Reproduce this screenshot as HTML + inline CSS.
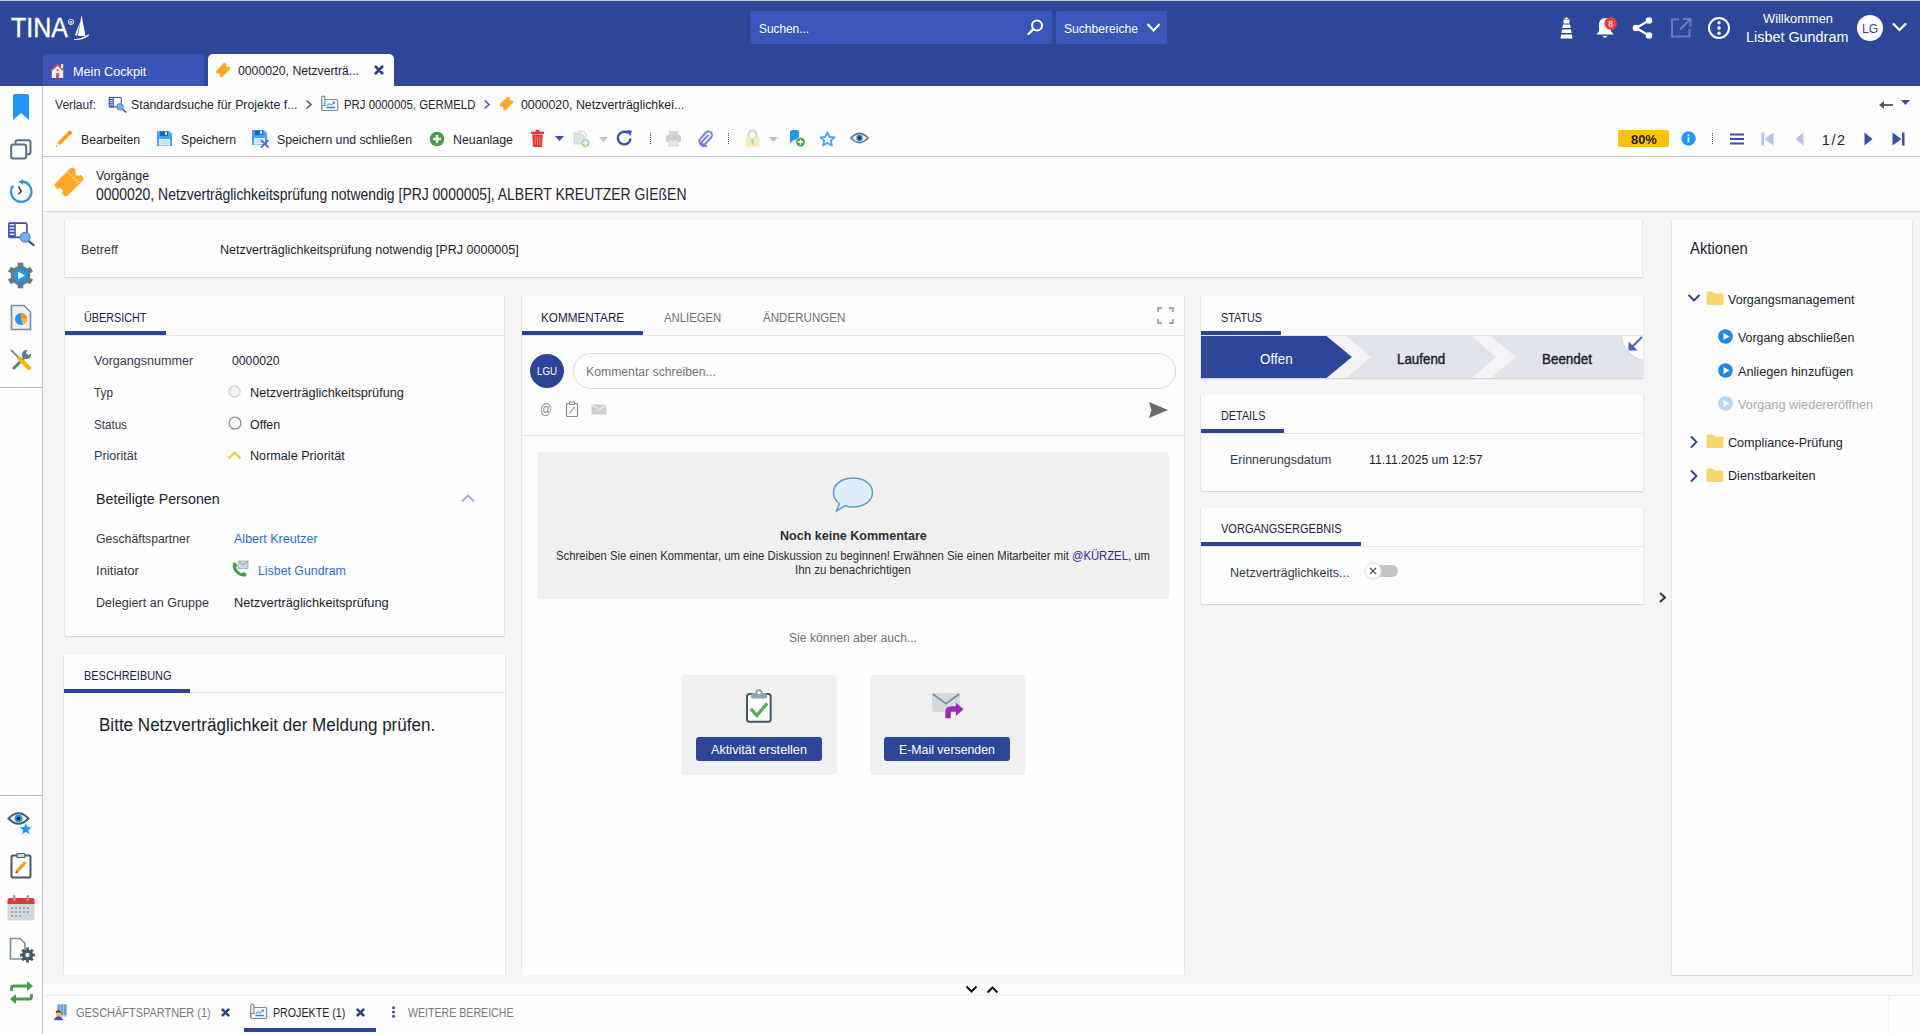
<!DOCTYPE html>
<html><head><meta charset="utf-8"><title>TINA</title>
<style>
*{box-sizing:border-box;margin:0;padding:0}
html,body{width:1920px;height:1034px;overflow:hidden;background:#fdfdfd;font-family:"Liberation Sans",sans-serif;color:#1f2230}
.a{position:absolute;display:block}
.t{position:absolute;white-space:nowrap;line-height:1}
.card{position:absolute;background:#fdfdfd;box-shadow:-1px 0 0 #e7e7e7,1px 0 0 #e7e7e7,0 1px 1px rgba(0,0,0,.13)}
</style></head><body>
<div class="a" style="left:0px;top:0px;width:1920px;height:86px;background:#2e4798;"></div>
<div class="a" style="left:0px;top:0px;width:1920px;height:1px;background:#c9c9cc;"></div>
<div class="a" style="left:0px;top:86px;width:42px;height:948px;background:#fdfdfd;"></div>
<div class="a" style="left:42px;top:86px;width:1px;height:948px;background:#c2c2c2;"></div>
<div class="a" style="left:0px;top:387px;width:42px;height:1px;background:#c2c2c2;"></div>
<div class="a" style="left:0px;top:795px;width:42px;height:1px;background:#c2c2c2;"></div>
<div class="a" style="left:43px;top:212px;width:1877px;height:772px;background:#f5f5f5;"></div>
<div class="a" style="left:43px;top:156px;width:1877px;height:1px;background:#c6c6c6;"></div>
<div class="a" style="left:43px;top:211px;width:1877px;height:1px;background:#dedede;"></div>
<div class="t" style="left:11.3px;top:15.24px;font-size:26.78px;color:#ffffff;transform:scaleX(0.9346);transform-origin:0 0;-webkit-text-stroke:0.35px #fff">TINA</div>
<svg class="a" style="left:67px;top:18px" width="8" height="8" viewBox="0 0 8 8"><circle cx="4" cy="4" r="2.7" fill="none" stroke="#fff" stroke-width="0.8"/><text x="4" y="5.5" font-size="4" text-anchor="middle" fill="#fff" font-family="Liberation Sans" font-weight="bold">R</text></svg>
<svg class="a" style="left:73px;top:14px" width="17" height="27" viewBox="0 0 17 27"><path d="M8.5 1 L12.5 22 L5 22 Z" fill="#fff"/><path d="M7.5 7 L4 22 L2 21 Z" fill="#fff"/><path d="M1 25 Q9 25 16 20 L15.5 22 Q9 26.5 1 26 Z" fill="#fff"/></svg>
<div class="a" style="left:750px;top:11px;width:302px;height:33px;background:#3a56b8;border-radius:2px"></div>
<div class="t" style="left:759.0px;top:22.90px;font-size:12.71px;color:#ffffff;transform:scaleX(0.9314);transform-origin:0 0;">Suchen...</div>
<svg class="a" style="left:1027px;top:19px" width="17" height="17" viewBox="0 0 17 17"><circle cx="10" cy="6.5" r="5" fill="none" stroke="#fff" stroke-width="2"/><path d="M6.5 10 L1.5 15" stroke="#fff" stroke-width="2.2" stroke-linecap="round"/></svg>
<div class="a" style="left:1056px;top:11px;width:111px;height:33px;background:#3a56b8;border-radius:2px"></div>
<div class="t" style="left:1064.0px;top:22.90px;font-size:12.71px;color:#ffffff;transform:scaleX(0.9524);transform-origin:0 0;">Suchbereiche</div>
<svg class="a" style="left:1146px;top:22px" width="15" height="11" viewBox="0 0 15 11"><path d="M1.5 2 L7.5 8.5 L13.5 2" fill="none" stroke="#fff" stroke-width="2.2"/></svg>
<svg class="a" style="left:1558px;top:16px" width="17" height="23" viewBox="0 0 17 23"><path d="M6 3 L8.5 1 L11 3 Z" fill="#fff"/><rect x="5.5" y="3.5" width="6" height="4" fill="#fff"/><path d="M5 8.5 L12 8.5 L12.8 12 L4.2 12 Z" fill="#fff"/><path d="M4 13.5 L13 13.5 L13.6 17 L3.4 17 Z" fill="#fff"/><path d="M3.2 18.5 L13.8 18.5 L14.5 22.5 L2.5 22.5 Z" fill="#fff"/></svg>
<svg class="a" style="left:1594px;top:15px" width="26" height="25" viewBox="0 0 26 25"><path d="M11 3 C6.5 3 5 7 5 10.5 L5 16 L2.5 19.5 L19.5 19.5 L17 16 L17 10.5 C17 7 15.5 3 11 3 Z" fill="#fff"/><path d="M8.5 21 Q11 24.5 13.5 21 Z" fill="#fff"/><circle cx="16.7" cy="8.5" r="6.3" fill="#e8403a"/><text x="16.7" y="11.6" font-size="8.5" text-anchor="middle" fill="#fff" font-family="Liberation Sans">8</text></svg>
<svg class="a" style="left:1631px;top:16px" width="24" height="24" viewBox="0 0 24 24"><circle cx="18" cy="4.5" r="3.3" fill="#fff"/><circle cx="18" cy="19.5" r="3.3" fill="#fff"/><circle cx="5" cy="12" r="3.3" fill="#fff"/><path d="M18 4.5 L5 12 L18 19.5" fill="none" stroke="#fff" stroke-width="2.2"/></svg>
<svg class="a" style="left:1670px;top:17px" width="23" height="21" viewBox="0 0 23 21"><path d="M9 2.5 L2 2.5 L2 19.5 L19.5 19.5 L19.5 12" fill="none" stroke="#6a7cc0" stroke-width="2"/><path d="M13 2 L20.5 2 L20.5 9.5 M20 2.5 L10 12.5" fill="none" stroke="#6a7cc0" stroke-width="2"/></svg>
<svg class="a" style="left:1707px;top:16px" width="24" height="24" viewBox="0 0 24 24"><circle cx="12" cy="12" r="10" fill="none" stroke="#fff" stroke-width="2"/><circle cx="12" cy="6.8" r="1.7" fill="#fff"/><circle cx="12" cy="12" r="1.7" fill="#fff"/><circle cx="12" cy="17.2" r="1.7" fill="#fff"/></svg>
<div class="t" style="left:1762.5px;top:12.99px;font-size:12.60px;color:#ffffff;transform:scaleX(1.0203);transform-origin:0 0;">Willkommen</div>
<div class="t" style="left:1746.0px;top:29.80px;font-size:14.70px;color:#ffffff;transform:scaleX(0.9800);transform-origin:0 0;">Lisbet Gundram</div>
<svg class="a" style="left:1856px;top:14px" width="28" height="28" viewBox="0 0 28 28"><circle cx="14" cy="14" r="13" fill="#fff"/></svg>
<div class="t" style="left:1861.5px;top:23.49px;font-size:12.60px;color:#2e4798;transform:scaleX(0.9519);transform-origin:0 0;">LG</div>
<svg class="a" style="left:1891px;top:21px" width="17" height="12" viewBox="0 0 17 12"><path d="M2 2.5 L8.5 9 L15 2.5" fill="none" stroke="#fff" stroke-width="2.2"/></svg>
<div class="a" style="left:43px;top:54px;width:161px;height:32px;background:#3955b7;border-radius:4px 4px 0 0"></div>
<svg class="a" style="left:49px;top:62px" width="17" height="17" viewBox="0 0 17 17"><path d="M8.5 1.5 L1 8.5 L2.2 9.6 L8.5 3.8 L14.8 9.6 L16 8.5 Z" fill="#d9534f"/><rect x="12" y="2" width="2.2" height="4" fill="#e8e8ee"/><path d="M2.8 9 L8.5 3.9 L14.2 9 L14.2 16 L2.8 16 Z" fill="#eeeef4"/><rect x="7" y="11" width="3.2" height="5" fill="#e8542a"/><circle cx="8.5" cy="8.2" r="1" fill="#2a6fb0"/></svg>
<div class="t" style="left:73.0px;top:66.10px;font-size:12.71px;color:#ffffff;transform:scaleX(0.9982);transform-origin:0 0;">Mein Cockpit</div>
<div class="a" style="left:208px;top:54px;width:186px;height:32px;background:#fdfdfd;border-radius:5px 5px 0 0"></div>
<svg class="a" style="left:214px;top:61px" width="18" height="18" viewBox="0 0 18 18"><g transform="rotate(-45 9.00 9.00)"><rect x="2.34" y="4.59" width="13.32" height="8.82" rx="1.62" fill="#ffa726"/><circle cx="2.34" cy="9.00" r="1.53" fill="#fdfdfd"/><circle cx="15.66" cy="9.00" r="1.53" fill="#fdfdfd"/></g></svg>
<div class="t" style="left:238.0px;top:65.40px;font-size:12.71px;color:#1f2230;transform:scaleX(0.9625);transform-origin:0 0;">0000020, Netzverträ...</div>
<svg class="a" style="left:374px;top:65px" width="10" height="10" viewBox="0 0 10 10"><path d="M1.8 1.8 L8.2 8.2 M8.2 1.8 L1.8 8.2" stroke="#2d3f8e" stroke-width="2.8" stroke-linecap="round"/></svg>
<div class="t" style="left:55.0px;top:99.10px;font-size:12.71px;color:#2a2d3a;transform:scaleX(0.9516);transform-origin:0 0;">Verlauf:</div>
<svg class="a" style="left:108.1px;top:96.1px" width="19" height="18" viewBox="0 0 19 18"><g transform="scale(0.6670)"><rect x="2" y="2.2" width="17.9" height="14.1" rx="1.5" fill="#fdfdfd" stroke="#3f51b5" stroke-width="1.7"/><rect x="1.2" y="1.4" width="7.6" height="15.7" rx="1.2" fill="#3f51b5"/><g fill="#e8eaf6"><rect x="2.6" y="3" width="4.8" height="1.5"/><rect x="2.6" y="6.2" width="4.8" height="1.5"/><rect x="2.6" y="9.3" width="4.8" height="1.5"/><rect x="2.6" y="12.6" width="4.8" height="1.5"/></g><path d="M21.5 19.8 L26.6 24.1" stroke="#455a64" stroke-width="2.2" stroke-linecap="round"/><circle cx="18.1" cy="16.3" r="5" fill="#64b5f6" stroke="#5d6b73" stroke-width="0.9"/></g></svg>
<div class="t" style="left:131.0px;top:99.10px;font-size:12.71px;color:#1f2230;transform:scaleX(0.9702);transform-origin:0 0;">Standardsuche für Projekte f...</div>
<svg class="a" style="left:305px;top:99px" width="8" height="11" viewBox="0 0 8 11"><path d="M1.5 1.5 L6 5.5 L1.5 9.5" fill="none" stroke="#4a55a5" stroke-width="1.6"/></svg>
<svg class="a" style="left:320px;top:95px" width="20" height="18" viewBox="0 0 20 18"><g transform="scale(1.0000)"><rect x="1.7" y="4.5" width="16" height="11" rx="1.2" fill="#f4f7fb" stroke="#78909c" stroke-width="1.2"/><path d="M1.7 14.5 V2.6 Q1.7 1.2 3.1 1.2 H3.5 Q4.9 1.2 4.9 2.6 V10.5 H1.7" fill="#eef3f8" stroke="#78909c" stroke-width="1.2"/><path d="M6.8 10.5 L9.3 8.7 L11.3 10 L14 7.7" fill="none" stroke="#64a8e8" stroke-width="1.2"/><circle cx="14" cy="7.6" r="1.1" fill="#1e88e5"/><path d="M6.5 12.5 H15" stroke="#1e88e5" stroke-width="1.4"/></g></svg>
<div class="t" style="left:343.6px;top:99.10px;font-size:12.71px;color:#1f2230;transform:scaleX(0.8946);transform-origin:0 0;">PRJ 0000005, GERMELD</div>
<svg class="a" style="left:483px;top:99px" width="8" height="11" viewBox="0 0 8 11"><path d="M1.5 1.5 L6 5.5 L1.5 9.5" fill="none" stroke="#4a55a5" stroke-width="1.6"/></svg>
<svg class="a" style="left:498px;top:95px" width="17" height="17" viewBox="0 0 17 17"><g transform="rotate(-45 8.50 8.50)"><rect x="2.21" y="4.33" width="12.58" height="8.33" rx="1.53" fill="#ffa726"/><circle cx="2.21" cy="8.50" r="1.45" fill="#fdfdfd"/><circle cx="14.79" cy="8.50" r="1.45" fill="#fdfdfd"/></g></svg>
<div class="t" style="left:521.2px;top:99.10px;font-size:12.71px;color:#1f2230;transform:scaleX(0.9715);transform-origin:0 0;">0000020, Netzverträglichkei...</div>
<svg class="a" style="left:1878px;top:99px" width="16" height="12" viewBox="0 0 16 12"><path d="M15 6 H4" stroke="#455a64" stroke-width="1.8"/><path d="M1 6 L6 2 V10 Z" fill="#455a64"/></svg>
<svg class="a" style="left:1900px;top:99px" width="11" height="7" viewBox="0 0 11 7"><path d="M1 1 L10 1 L5.5 6 Z" fill="#3a4fa8"/></svg>
<svg class="a" style="left:55px;top:129px" width="18" height="19" viewBox="0 0 18 19"><path d="M14.5 1.5 L17 4 L5 16 L2.5 13.5 Z" fill="#ffa000"/><path d="M14.5 1.5 L17 4 L15.5 5.5 L13 3 Z" fill="#e57373"/><path d="M2.5 13.5 L5 16 L1 17.8 Z" fill="#ffe0b2"/><path d="M1.6 16.4 L1 17.8 L2.4 17.2 Z" fill="#333"/></svg>
<div class="t" style="left:80.5px;top:133.70px;font-size:12.71px;color:#1f2230;transform:scaleX(0.9600);transform-origin:0 0;">Bearbeiten</div>
<svg class="a" style="left:156px;top:130px" width="17" height="17" viewBox="0 0 17 17"><path d="M1 1 L13 1 L16 4 L16 16 L1 16 Z" fill="#42a5f5"/><rect x="4" y="1.5" width="8" height="4.5" fill="#1565c0"/><rect x="9" y="2" width="2" height="3" fill="#e3f2fd"/><rect x="3" y="9" width="11" height="6.5" fill="#e3f2fd"/><path d="M4.5 11h8M4.5 13h8" stroke="#90caf9" stroke-width="0.8"/></svg>
<div class="t" style="left:180.5px;top:133.70px;font-size:12.71px;color:#1f2230;transform:scaleX(0.9613);transform-origin:0 0;">Speichern</div>
<svg class="a" style="left:251px;top:129px" width="19" height="19" viewBox="0 0 19 19"><path d="M1 1 L13 1 L16 4 L16 16 L1 16 Z" fill="#42a5f5"/><rect x="4" y="1.5" width="8" height="4.5" fill="#1565c0"/><rect x="9" y="2" width="2" height="3" fill="#e3f2fd"/><rect x="3" y="9" width="11" height="6.5" fill="#e3f2fd"/><path d="M4.5 11h8M4.5 13h8" stroke="#90caf9" stroke-width="0.8"/><path d="M10 11 L17.5 18.5 M17.5 11 L10 18.5" stroke="#5c6bc0" stroke-width="1.8"/></svg>
<div class="t" style="left:276.5px;top:133.70px;font-size:12.71px;color:#1f2230;transform:scaleX(0.9653);transform-origin:0 0;">Speichern und schließen</div>
<svg class="a" style="left:429px;top:131px" width="16" height="16" viewBox="0 0 16 16"><circle cx="8" cy="8" r="7.3" fill="#43a047"/><path d="M8 4 V12 M4 8 H12" stroke="#fff" stroke-width="2.4"/></svg>
<div class="t" style="left:453.0px;top:133.70px;font-size:12.71px;color:#1f2230;transform:scaleX(0.9762);transform-origin:0 0;">Neuanlage</div>
<svg class="a" style="left:530px;top:129px" width="15" height="19" viewBox="0 0 15 19"><rect x="1" y="2.5" width="13" height="2.5" rx="0.6" fill="#e53935"/><rect x="5.5" y="0.8" width="4" height="2" fill="#e53935"/><path d="M2.2 5.5 H12.8 L12 18 H3 Z" fill="#e53935"/><path d="M5.2 7.5 V16 M7.5 7.5 V16 M9.8 7.5 V16" stroke="#ff8a80" stroke-width="0.9"/></svg>
<svg class="a" style="left:555px;top:136px" width="9" height="5" viewBox="0 0 9 5"><path d="M0 0 H9 L4.5 5 Z" fill="#3a4fa8"/></svg>
<svg class="a" style="left:573px;top:130px" width="18" height="18" viewBox="0 0 18 18"><path d="M1 3 H8 L11 6 V14 H1 Z" fill="#dde3e8" stroke="#c8d0d6" stroke-width="0.8"/><path d="M4 1 H10 L13 4 V11" fill="none" stroke="#c8d0d6" stroke-width="1"/><circle cx="12.5" cy="13" r="4.3" fill="#a5d6a7"/><path d="M12.5 10.5 V15.5 M10 13 H15" stroke="#fff" stroke-width="1.6"/></svg>
<svg class="a" style="left:599px;top:137px" width="9" height="5" viewBox="0 0 9 5"><path d="M0 0 H9 L4.5 5 Z" fill="#b8c0e6"/></svg>
<svg class="a" style="left:616px;top:129px" width="18" height="18" viewBox="0 0 18 18"><path d="M14.5 9.5 A6.3 6.3 0 1 1 12 4" fill="none" stroke="#3a4fb8" stroke-width="2.4"/><path d="M10 1.2 L15.8 1.5 L14.5 7 Z" fill="#3a4fb8"/></svg>
<svg class="a" style="left:650px;top:133px" width="2" height="11" viewBox="0 0 2 11"><path d="M0.5 0 V11" stroke="#3f51b5" stroke-width="1" stroke-dasharray="1 1"/></svg>
<svg class="a" style="left:665px;top:130px" width="17" height="17" viewBox="0 0 17 17"><rect x="4" y="1" width="9" height="4" fill="#d5d5d5"/><rect x="1" y="5" width="15" height="7" rx="1.5" fill="#cfcfcf"/><rect x="4" y="10" width="9" height="6" fill="#e6e6e6" stroke="#cfcfcf" stroke-width="0.8"/></svg>
<svg class="a" style="left:697px;top:130px" width="16" height="17" viewBox="0 0 16 17"><path d="M11.5 5 L5 11.5 A2 2 0 0 0 8 14 L14 7.5 A3.5 3.5 0 0 0 9 2.5 L3 9 A5 5 0 0 0 10 15.5" fill="none" stroke="#7b7fd8" stroke-width="1.9"/></svg>
<svg class="a" style="left:728px;top:133px" width="2" height="11" viewBox="0 0 2 11"><path d="M0.5 0 V11" stroke="#3f51b5" stroke-width="1" stroke-dasharray="1 1"/></svg>
<svg class="a" style="left:744px;top:129px" width="17" height="19" viewBox="0 0 17 19"><path d="M4.5 8 V5.5 A4 4 0 0 1 12.5 5.5 V8" fill="none" stroke="#c5ccd0" stroke-width="2"/><rect x="1.5" y="8" width="14" height="10" rx="1.2" fill="#f9edb5"/><circle cx="8.5" cy="11.5" r="1.3" fill="#b8c4ca"/><rect x="7.8" y="11.5" width="1.4" height="4" fill="#b8c4ca"/></svg>
<svg class="a" style="left:769px;top:137px" width="9" height="5" viewBox="0 0 9 5"><path d="M0 0 H9 L4.5 5 Z" fill="#b8c0e6"/></svg>
<svg class="a" style="left:789px;top:129px" width="17" height="19" viewBox="0 0 17 19"><path d="M1 3.2 Q1 1 3.2 1 H7.8 Q10 1 10 3.2 V14 L5.5 10.5 L1 14 Z" fill="#2196f3"/><circle cx="11.5" cy="13" r="4.8" fill="#43a047" stroke="#fdfdfd" stroke-width="0.8"/><path d="M11.5 10.3 V15.7 M8.8 13 H14.2" stroke="#fff" stroke-width="1.6"/></svg>
<svg class="a" style="left:819px;top:131px" width="17" height="16" viewBox="0 0 17 16"><path d="M8.5 1.5 L10.6 6 L15.5 6.4 L11.8 9.7 L12.9 14.6 L8.5 12 L4.1 14.6 L5.2 9.7 L1.5 6.4 L6.4 6 Z" fill="none" stroke="#42a5f5" stroke-width="1.8" stroke-linejoin="round"/></svg>
<svg class="a" style="left:850px;top:132px" width="19" height="12" viewBox="0 0 19 12"><path d="M1 6 Q9.5 -3 18 6 Q9.5 15 1 6 Z" fill="#fff" stroke="#607d8b" stroke-width="1.8"/><circle cx="9.5" cy="6" r="3.2" fill="#1e88e5"/><circle cx="9.5" cy="6" r="1.4" fill="#111"/></svg>
<div class="a" style="left:1618px;top:130px;width:51px;height:17px;background:#ffc107;border-radius:2px"></div>
<div class="t" style="left:1631.2px;top:134.29px;font-size:12.60px;color:#1a1a1a;font-weight:bold;transform:scaleX(1.0231);transform-origin:0 0;">80%</div>
<svg class="a" style="left:1681px;top:131px" width="15" height="15" viewBox="0 0 15 15"><circle cx="7.5" cy="7.5" r="7.2" fill="#2196f3"/><rect x="6.6" y="6.3" width="1.8" height="5" fill="#fff"/><circle cx="7.5" cy="4.3" r="1" fill="#fff"/></svg>
<svg class="a" style="left:1712px;top:133px" width="2" height="12" viewBox="0 0 2 12"><path d="M0.5 0 V12" stroke="#3f51b5" stroke-width="1" stroke-dasharray="1 1"/></svg>
<svg class="a" style="left:1730px;top:133px" width="14" height="12" viewBox="0 0 14 12"><path d="M0 1.5 H14 M0 6 H14 M0 10.5 H14" stroke="#3a4fa8" stroke-width="2"/></svg>
<svg class="a" style="left:1761px;top:132px" width="13" height="14" viewBox="0 0 13 14"><rect x="0.5" y="0.5" width="2.5" height="13" fill="#b8c0e6"/><path d="M12.5 0.5 V13.5 L3.5 7 Z" fill="#b8c0e6"/></svg>
<svg class="a" style="left:1795px;top:132px" width="9" height="14" viewBox="0 0 9 14"><path d="M8.5 0.5 V13.5 L0.5 7 Z" fill="#b8c0e6"/></svg>
<div class="t" style="left:1821.8px;top:133.38px;font-size:14.50px;color:#1f2230;letter-spacing:1.6px">1/2</div>
<svg class="a" style="left:1864px;top:132px" width="9" height="14" viewBox="0 0 9 14"><path d="M0.5 0.5 V13.5 L8.5 7 Z" fill="#3a4fa8"/></svg>
<svg class="a" style="left:1892px;top:132px" width="13" height="14" viewBox="0 0 13 14"><path d="M0.5 0.5 V13.5 L9.5 7 Z" fill="#3a4fa8"/><rect x="10" y="0.5" width="2.5" height="13" fill="#3a4fa8"/></svg>
<svg class="a" style="left:51px;top:164px" width="36" height="36" viewBox="0 0 36 36"><g transform="rotate(-45 18.00 18.00)"><rect x="4.68" y="9.18" width="26.64" height="17.64" rx="3.24" fill="#ffa726"/><circle cx="4.68" cy="18.00" r="3.06" fill="#fdfdfd"/><circle cx="31.32" cy="18.00" r="3.06" fill="#fdfdfd"/><circle cx="24.12" cy="11.65" r="1.01" fill="#ffd9a0"/><circle cx="24.12" cy="14.82" r="1.01" fill="#ffd9a0"/><circle cx="24.12" cy="18.00" r="1.01" fill="#ffd9a0"/><circle cx="24.12" cy="21.18" r="1.01" fill="#ffd9a0"/><circle cx="24.12" cy="24.35" r="1.01" fill="#ffd9a0"/></g></svg>
<div class="t" style="left:96.2px;top:169.90px;font-size:12.71px;color:#1f2230;transform:scaleX(0.9761);transform-origin:0 0;">Vorgänge</div>
<div class="t" style="left:96.0px;top:186.51px;font-size:15.75px;color:#1f2230;transform:scaleX(0.8859);transform-origin:0 0;">0000020, Netzverträglichkeitsprüfung notwendig [PRJ 0000005], ALBERT KREUTZER GIEßEN</div>
<div class="card" style="left:65px;top:220px;width:1577px;height:57px;"></div>
<div class="t" style="left:80.8px;top:244.10px;font-size:12.71px;color:#343849;transform:scaleX(0.9866);transform-origin:0 0;">Betreff</div>
<div class="t" style="left:220.0px;top:244.10px;font-size:12.71px;color:#1b1e2c;transform:scaleX(0.9862);transform-origin:0 0;">Netzverträglichkeitsprüfung notwendig [PRJ 0000005]</div>
<div class="card" style="left:65px;top:296px;width:439px;height:340px;"></div>
<div class="t" style="left:84.3px;top:311.80px;font-size:12.71px;color:#1c2240;transform:scaleX(0.8500);transform-origin:0 0;">ÜBERSICHT</div>
<div class="a" style="left:65px;top:335px;width:439px;height:1px;background:#e4e4e4;"></div>
<div class="a" style="left:65px;top:331px;width:101px;height:4px;background:#2c4397;"></div>
<div class="t" style="left:93.7px;top:354.90px;font-size:12.71px;color:#343849;transform:scaleX(0.9892);transform-origin:0 0;">Vorgangsnummer</div>
<div class="t" style="left:232.0px;top:354.90px;font-size:12.71px;color:#1b1e2c;transform:scaleX(0.9623);transform-origin:0 0;">0000020</div>
<div class="t" style="left:93.7px;top:386.90px;font-size:12.71px;color:#343849;transform:scaleX(0.9229);transform-origin:0 0;">Typ</div>
<svg class="a" style="left:228px;top:385px" width="13" height="13" viewBox="0 0 13 13"><circle cx="6.5" cy="6.5" r="5.6" fill="#eef1f8" stroke="#c9cdd3" stroke-width="1.1"/></svg>
<div class="t" style="left:249.5px;top:386.90px;font-size:12.71px;color:#1b1e2c;transform:scaleX(0.9997);transform-origin:0 0;">Netzverträglichkeitsprüfung</div>
<div class="t" style="left:93.7px;top:418.90px;font-size:12.71px;color:#343849;transform:scaleX(0.9134);transform-origin:0 0;">Status</div>
<svg class="a" style="left:228px;top:416px" width="14" height="14" viewBox="0 0 14 14"><circle cx="7" cy="7" r="5.9" fill="#fdfdfd" stroke="#8f8f8f" stroke-width="1.3"/></svg>
<div class="t" style="left:249.5px;top:418.90px;font-size:12.71px;color:#1b1e2c;transform:scaleX(0.9791);transform-origin:0 0;">Offen</div>
<div class="t" style="left:93.7px;top:449.90px;font-size:12.71px;color:#343849;transform:scaleX(0.9892);transform-origin:0 0;">Priorität</div>
<svg class="a" style="left:227px;top:450px" width="15" height="10" viewBox="0 0 15 10"><path d="M1.5 8.5 L7.5 2.5 L13.5 8.5" fill="none" stroke="#f9c12e" stroke-width="1.8"/></svg>
<div class="t" style="left:249.5px;top:449.90px;font-size:12.71px;color:#1b1e2c;transform:scaleX(0.9935);transform-origin:0 0;">Normale Priorität</div>
<div class="t" style="left:95.5px;top:492.20px;font-size:14.70px;color:#1b1e2c;transform:scaleX(0.9711);transform-origin:0 0;">Beteiligte Personen</div>
<svg class="a" style="left:460px;top:492px" width="16" height="12" viewBox="0 0 16 12"><path d="M2 9.5 L8 3.5 L14 9.5" fill="none" stroke="#a3acd0" stroke-width="1.8"/></svg>
<div class="t" style="left:95.5px;top:532.90px;font-size:12.71px;color:#343849;transform:scaleX(0.9646);transform-origin:0 0;">Geschäftspartner</div>
<div class="t" style="left:234.2px;top:532.90px;font-size:12.71px;color:#1f6fd1;transform:scaleX(0.9866);transform-origin:0 0;">Albert Kreutzer</div>
<div class="t" style="left:95.5px;top:565.00px;font-size:12.71px;color:#343849;transform:scaleX(1.0297);transform-origin:0 0;">Initiator</div>
<svg class="a" style="left:231px;top:560px" width="18" height="18" viewBox="0 0 18 18"><path d="M2 3 Q1 9 5 13 Q9 17 15 16.5 L15.5 13.5 L12 12 L10.5 13.5 Q6.5 11.5 5 7.5 L6.5 6 L5 2.5 Z" fill="#43a047"/><rect x="7.5" y="1" width="9.5" height="7.5" fill="#cfd8dc" stroke="#90a4ae" stroke-width="0.8"/><path d="M7.8 1.4 L12.25 5 L16.7 1.4" fill="none" stroke="#78909c" stroke-width="0.8"/></svg>
<div class="t" style="left:257.5px;top:565.00px;font-size:12.71px;color:#1f6fd1;transform:scaleX(0.9713);transform-origin:0 0;">Lisbet Gundram</div>
<div class="t" style="left:95.5px;top:597.10px;font-size:12.71px;color:#343849;transform:scaleX(0.9876);transform-origin:0 0;">Delegiert an Gruppe</div>
<div class="t" style="left:234.2px;top:597.10px;font-size:12.71px;color:#1b1e2c;transform:scaleX(1.0042);transform-origin:0 0;">Netzverträglichkeitsprüfung</div>
<div class="card" style="left:64px;top:655px;width:441px;height:320px;box-shadow:-1px 0 0 #e7e7e7,1px 0 0 #e7e7e7"></div>
<div class="t" style="left:83.5px;top:670.30px;font-size:12.71px;color:#1c2240;transform:scaleX(0.8607);transform-origin:0 0;">BESCHREIBUNG</div>
<div class="a" style="left:64px;top:692px;width:441px;height:1px;background:#e4e4e4;"></div>
<div class="a" style="left:64px;top:689px;width:126px;height:4px;background:#2c4397;"></div>
<div class="t" style="left:98.5px;top:716.93px;font-size:17.85px;color:#1b1e2c;transform:scaleX(0.9548);transform-origin:0 0;">Bitte Netzverträglichkeit der Meldung prüfen.</div>
<div class="card" style="left:522px;top:296px;width:662px;height:679px;box-shadow:-1px 0 0 #e7e7e7,1px 0 0 #e7e7e7"></div>
<div class="t" style="left:540.8px;top:311.80px;font-size:12.71px;color:#1c2240;transform:scaleX(0.9232);transform-origin:0 0;">KOMMENTARE</div>
<div class="t" style="left:664.0px;top:311.80px;font-size:12.71px;color:#6d707c;transform:scaleX(0.8918);transform-origin:0 0;">ANLIEGEN</div>
<div class="t" style="left:762.5px;top:311.80px;font-size:12.71px;color:#6d707c;transform:scaleX(0.9119);transform-origin:0 0;">ÄNDERUNGEN</div>
<div class="a" style="left:522px;top:335px;width:662px;height:1px;background:#e4e4e4;"></div>
<div class="a" style="left:522px;top:331px;width:121px;height:4px;background:#2c4397;"></div>
<svg class="a" style="left:1157px;top:307px" width="17" height="17" viewBox="0 0 17 17"><path d="M1 5 V1 H5 M12 1 H16 V5 M16 12 V16 H12 M5 16 H1 V12" fill="none" stroke="#97a2c9" stroke-width="1.8"/></svg>
<svg class="a" style="left:530px;top:354px" width="34" height="34" viewBox="0 0 34 34"><circle cx="17" cy="17" r="17" fill="#2c4397"/></svg>
<div class="t" style="left:537.0px;top:366.18px;font-size:11.55px;color:#fff;transform:scaleX(0.8421);transform-origin:0 0;">LGU</div>
<div class="a" style="left:573px;top:353px;width:603px;height:36px;border:1px solid #dcdcdc;border-radius:18px;background:#fdfdfd"></div>
<div class="t" style="left:586.4px;top:365.50px;font-size:12.71px;color:#6f7178;transform:scaleX(0.9624);transform-origin:0 0;">Kommentar schreiben...</div>
<div class="t" style="left:539.6px;top:402.30px;font-size:14.00px;color:#8a8a8a;transform:scaleX(0.8443);transform-origin:0 0;">@</div>
<svg class="a" style="left:565px;top:401px" width="14" height="16" viewBox="0 0 14 16"><rect x="1.5" y="2.5" width="11" height="13" rx="1" fill="none" stroke="#8a8a8a" stroke-width="1.2"/><rect x="4.5" y="1" width="5" height="2.5" fill="#fdfdfd" stroke="#8a8a8a" stroke-width="1"/><path d="M4.5 12.5 L9.5 6" stroke="#8a8a8a" stroke-width="1.2"/></svg>
<svg class="a" style="left:591px;top:404px" width="16" height="11" viewBox="0 0 16 11"><rect x="0.5" y="0.5" width="15" height="10" fill="#cfcfcf"/><path d="M0.5 0.5 L8 6 L15.5 0.5" fill="none" stroke="#eeeeee" stroke-width="1.2"/></svg>
<svg class="a" style="left:1148px;top:401px" width="21" height="18" viewBox="0 0 21 18"><path d="M1 1 L20 9 L1 17 L3.5 9 Z" fill="#6b6b6b"/></svg>
<div class="a" style="left:522px;top:435px;width:662px;height:1px;background:#e8e8e8;"></div>
<div class="a" style="left:537px;top:452px;width:632px;height:147px;background:#f0f0f0;border-radius:4px"></div>
<svg class="a" style="left:831px;top:476px" width="44" height="38" viewBox="0 0 44 38"><path d="M22 2 C33 2 41.5 8 41.5 16.5 C41.5 25 33 31 22 31 C19 31 16.5 30.6 14 29.8 L5.5 35 L8.5 27.5 C4.5 24.8 2.5 21 2.5 16.5 C2.5 8 11 2 22 2 Z" fill="#ddeefb" stroke="#5d9ad6" stroke-width="1.5"/></svg>
<div class="t" style="left:779.5px;top:529.14px;font-size:13.12px;color:#2e2e2e;font-weight:bold;transform:scaleX(0.9552);transform-origin:0 0;">Noch keine Kommentare</div>
<div class="t" style="left:555.8px;top:550.61px;font-size:11.87px;color:#2e2e2e;transform:scaleX(0.9521);transform-origin:0 0;">Schreiben Sie einen Kommentar, um eine Diskussion zu beginnen! Erwähnen Sie einen Mitarbeiter mit <span style="color:#2c2ca0">@KÜRZEL</span>, um</div>
<div class="t" style="left:795.3px;top:565.21px;font-size:11.87px;color:#2e2e2e;transform:scaleX(0.9707);transform-origin:0 0;">Ihn zu benachrichtigen</div>
<div class="t" style="left:788.7px;top:631.90px;font-size:12.71px;color:#6f7178;transform:scaleX(0.9538);transform-origin:0 0;">Sie können aber auch...</div>
<div class="a" style="left:681px;top:675px;width:156px;height:100px;background:#f0f0f0;border-radius:4px"></div>
<div class="a" style="left:870px;top:675px;width:155px;height:100px;background:#f0f0f0;border-radius:4px"></div>
<svg class="a" style="left:744px;top:688px" width="30" height="37" viewBox="0 0 30 37"><rect x="3" y="6" width="23.7" height="27.7" rx="2.5" fill="#fdfdfd" stroke="#455a64" stroke-width="2"/><rect x="7" y="5" width="16" height="5.5" rx="1.5" fill="#90a4ae"/><circle cx="15" cy="4.6" r="2.6" fill="#fdfdfd" stroke="#90a4ae" stroke-width="1.9"/><path d="M6.8 20.8 L12.8 27.6 L23.2 15.3" fill="none" stroke="#4caf50" stroke-width="3.2"/></svg>
<div class="a" style="left:696px;top:737px;width:126px;height:24px;background:#2e4699;border-radius:3px"></div>
<div class="t" style="left:711.0px;top:743.99px;font-size:12.60px;color:#fff;transform:scaleX(1.0080);transform-origin:0 0;">Aktivität erstellen</div>
<svg class="a" style="left:930px;top:691px" width="36" height="30" viewBox="0 0 36 30"><rect x="2" y="2" width="28" height="19" rx="3" fill="#d3d9de"/><path d="M2.8 3 L16 12.6 L29.2 3" fill="none" stroke="#78909c" stroke-width="1.7"/><path d="M15 27.6 V21 Q15 15 21 15 H25.5 V11 L34 18.3 L25.5 25.6 V21 H22 Q21 21 21 22 V27.6 Z" fill="#9c27b0" stroke="#f0f0f0" stroke-width="0.6"/></svg>
<div class="a" style="left:884px;top:737px;width:126px;height:24px;background:#2e4699;border-radius:3px"></div>
<div class="t" style="left:899.0px;top:743.99px;font-size:12.60px;color:#fff;transform:scaleX(0.9791);transform-origin:0 0;">E-Mail versenden</div>
<div class="card" style="left:1201px;top:296px;width:442px;height:82px;"></div>
<div class="t" style="left:1220.6px;top:311.80px;font-size:12.71px;color:#1c2240;transform:scaleX(0.8521);transform-origin:0 0;">STATUS</div>
<div class="a" style="left:1201px;top:335px;width:442px;height:1px;background:#e4e4e4;"></div>
<div class="a" style="left:1201px;top:331px;width:80px;height:4px;background:#2c4397;"></div>
<svg class="a" style="left:1201px;top:336px" width="442" height="42" viewBox="0 0 442 42"><rect x="0" y="0" width="442" height="42" fill="#f4f4f6"/><path d="M0 0 H125.5 L151 21 L125.5 42 H0 Z" fill="#2e4699"/><path d="M145 0 H271 L295 21 L271 42 H145 L170 21 Z" fill="#e1e4ec"/><path d="M290 0 H442 V42 H290 L314.5 21 Z" fill="#e1e4ec"/><circle cx="448" cy="-3" r="28.5" fill="#d6d6d6"/><circle cx="448" cy="-3" r="27.5" fill="#fdfdfd"/><path d="M441 1 L431 11" stroke="#4f63b8" stroke-width="2.2"/><path d="M427.5 5.5 V14.5 H436.5 Z" fill="#4f63b8"/></svg>
<div class="t" style="left:1260.0px;top:351.55px;font-size:14.18px;color:#fff;transform:scaleX(0.9473);transform-origin:0 0;">Offen</div>
<div class="t" style="left:1397.2px;top:351.55px;font-size:14.18px;color:#23252e;transform:scaleX(0.9426);transform-origin:0 0;-webkit-text-stroke:0.45px #23252e">Laufend</div>
<div class="t" style="left:1541.9px;top:351.55px;font-size:14.18px;color:#23252e;transform:scaleX(0.9449);transform-origin:0 0;-webkit-text-stroke:0.45px #23252e">Beendet</div>
<div class="card" style="left:1201px;top:395px;width:442px;height:96px;"></div>
<div class="t" style="left:1220.6px;top:409.70px;font-size:12.71px;color:#1c2240;transform:scaleX(0.8536);transform-origin:0 0;">DETAILS</div>
<div class="a" style="left:1201px;top:433px;width:442px;height:1px;background:#e4e4e4;"></div>
<div class="a" style="left:1201px;top:429px;width:83px;height:4px;background:#2c4397;"></div>
<div class="t" style="left:1230.0px;top:454.10px;font-size:12.71px;color:#343849;transform:scaleX(0.9767);transform-origin:0 0;">Erinnerungsdatum</div>
<div class="t" style="left:1369.2px;top:454.10px;font-size:12.71px;color:#1b1e2c;transform:scaleX(0.9602);transform-origin:0 0;">11.11.2025 um 12:57</div>
<div class="card" style="left:1201px;top:508px;width:442px;height:96px;"></div>
<div class="t" style="left:1220.6px;top:523.10px;font-size:12.71px;color:#1c2240;transform:scaleX(0.8678);transform-origin:0 0;">VORGANGSERGEBNIS</div>
<div class="a" style="left:1201px;top:546px;width:442px;height:1px;background:#e4e4e4;"></div>
<div class="a" style="left:1201px;top:542px;width:160px;height:4px;background:#2c4397;"></div>
<div class="t" style="left:1230.0px;top:566.90px;font-size:12.71px;color:#343849;transform:scaleX(0.9840);transform-origin:0 0;">Netzverträglichkeits...</div>
<svg class="a" style="left:1362px;top:560px" width="38" height="22" viewBox="0 0 38 22"><rect x="6" y="5" width="30" height="12" rx="6" fill="#c4c4c4"/><circle cx="11" cy="11" r="8.2" fill="#fdfdfd" stroke="#dcdcdc" stroke-width="1"/><path d="M8 8 L14 14 M14 8 L8 14" stroke="#555" stroke-width="1.3"/></svg>
<svg class="a" style="left:1658px;top:591px" width="10" height="13" viewBox="0 0 10 13"><path d="M2 2 L7 6.5 L2 11" fill="none" stroke="#333" stroke-width="2"/></svg>
<div class="card" style="left:1672px;top:220px;width:240px;height:755px;"></div>
<div class="t" style="left:1689.5px;top:240.81px;font-size:15.75px;color:#1b1e2c;transform:scaleX(0.9430);transform-origin:0 0;">Aktionen</div>
<svg class="a" style="left:1687px;top:293px" width="15" height="10" viewBox="0 0 15 10"><path d="M1.5 2 L7 7.5 L12.5 2" fill="none" stroke="#2c3e8c" stroke-width="1.8"/></svg>
<svg class="a" style="left:1706px;top:291px" width="18" height="15" viewBox="0 0 18 15"><path d="M0.5 2 Q0.5 0.5 2 0.5 H6.5 L8.5 2.5 H16 Q17.5 2.5 17.5 4 V12.5 Q17.5 14 16 14 H2 Q0.5 14 0.5 12.5 Z" fill="#f8d66f"/></svg>
<div class="t" style="left:1728.4px;top:293.70px;font-size:12.71px;color:#1b1e2c;transform:scaleX(0.9894);transform-origin:0 0;">Vorgangsmanagement</div>
<svg class="a" style="left:1718px;top:329px" width="15" height="15" viewBox="0 0 15 15"><circle cx="7.5" cy="7.5" r="7.3" fill="#1e88e5"/><path d="M5.5 4 L11.5 7.5 L5.5 11 Z" fill="#fdfdfd"/></svg>
<div class="t" style="left:1738.0px;top:331.80px;font-size:12.71px;color:#1b1e2c;transform:scaleX(0.9742);transform-origin:0 0;">Vorgang abschließen</div>
<svg class="a" style="left:1718px;top:363px" width="15" height="15" viewBox="0 0 15 15"><circle cx="7.5" cy="7.5" r="7.3" fill="#1e88e5"/><path d="M5.5 4 L11.5 7.5 L5.5 11 Z" fill="#fdfdfd"/></svg>
<div class="t" style="left:1738.0px;top:365.70px;font-size:12.71px;color:#1b1e2c;transform:scaleX(0.9996);transform-origin:0 0;">Anliegen hinzufügen</div>
<svg class="a" style="left:1718px;top:396px" width="15" height="15" viewBox="0 0 15 15"><circle cx="7.5" cy="7.5" r="7.3" fill="#b3d7f7"/><path d="M5.5 4 L11.5 7.5 L5.5 11 Z" fill="#fdfdfd"/></svg>
<div class="t" style="left:1738.0px;top:398.60px;font-size:12.71px;color:#aaaaaa;transform:scaleX(1.0038);transform-origin:0 0;">Vorgang wiedereröffnen</div>
<svg class="a" style="left:1689px;top:435px" width="10" height="15" viewBox="0 0 10 15"><path d="M2 1.5 L7.5 7 L2 12.5" fill="none" stroke="#2c3e8c" stroke-width="1.8"/></svg>
<svg class="a" style="left:1706px;top:434px" width="18" height="15" viewBox="0 0 18 15"><path d="M0.5 2 Q0.5 0.5 2 0.5 H6.5 L8.5 2.5 H16 Q17.5 2.5 17.5 4 V12.5 Q17.5 14 16 14 H2 Q0.5 14 0.5 12.5 Z" fill="#f8d66f"/></svg>
<div class="t" style="left:1728.4px;top:436.70px;font-size:12.71px;color:#1b1e2c;transform:scaleX(0.9912);transform-origin:0 0;">Compliance-Prüfung</div>
<svg class="a" style="left:1689px;top:469px" width="10" height="15" viewBox="0 0 10 15"><path d="M2 1.5 L7.5 7 L2 12.5" fill="none" stroke="#2c3e8c" stroke-width="1.8"/></svg>
<svg class="a" style="left:1706px;top:468px" width="18" height="15" viewBox="0 0 18 15"><path d="M0.5 2 Q0.5 0.5 2 0.5 H6.5 L8.5 2.5 H16 Q17.5 2.5 17.5 4 V12.5 Q17.5 14 16 14 H2 Q0.5 14 0.5 12.5 Z" fill="#f8d66f"/></svg>
<div class="t" style="left:1728.4px;top:470.30px;font-size:12.71px;color:#1b1e2c;transform:scaleX(0.9923);transform-origin:0 0;">Dienstbarkeiten</div>
<div class="a" style="left:43px;top:995px;width:1877px;height:1px;background:#eeeeee;"></div>
<svg class="a" style="left:965px;top:985px" width="13" height="9" viewBox="0 0 13 9"><path d="M1.5 1.5 L6.5 6.5 L11.5 1.5" fill="none" stroke="#111" stroke-width="2"/></svg>
<svg class="a" style="left:986px;top:985px" width="13" height="9" viewBox="0 0 13 9"><path d="M1.5 7.5 L6.5 2.5 L11.5 7.5" fill="none" stroke="#111" stroke-width="2"/></svg>
<div class="a" style="left:1888px;top:996px;width:1px;height:38px;background:#f1f1f1;"></div>
<svg class="a" style="left:53px;top:1003px" width="16" height="19" viewBox="0 0 16 19"><rect x="4" y="1" width="10" height="12.7" fill="#c4c4c4"/><g fill="#1e88e5"><rect x="5.0" y="2.3" width="2.2" height="1.3" rx="0.6"/><rect x="8.0" y="2.3" width="2.2" height="1.3" rx="0.6"/><rect x="11.0" y="2.3" width="2.2" height="1.3" rx="0.6"/><rect x="5.0" y="4.3" width="2.2" height="1.3" rx="0.6"/><rect x="8.0" y="4.3" width="2.2" height="1.3" rx="0.6"/><rect x="11.0" y="4.3" width="2.2" height="1.3" rx="0.6"/><rect x="5.0" y="6.3" width="2.2" height="1.3" rx="0.6"/><rect x="8.0" y="6.3" width="2.2" height="1.3" rx="0.6"/><rect x="11.0" y="6.3" width="2.2" height="1.3" rx="0.6"/><rect x="5.0" y="8.3" width="2.2" height="1.3" rx="0.6"/><rect x="8.0" y="8.3" width="2.2" height="1.3" rx="0.6"/><rect x="11.0" y="8.3" width="2.2" height="1.3" rx="0.6"/><rect x="5.0" y="10.3" width="2.2" height="1.3" rx="0.6"/><rect x="8.0" y="10.3" width="2.2" height="1.3" rx="0.6"/><rect x="11.0" y="10.3" width="2.2" height="1.3" rx="0.6"/></g><path d="M1 17.3 Q1.5 13.8 5.4 13.3 Q9.3 13.8 10 17.3 Z" fill="#3f51b5"/><rect x="5" y="13.5" width="0.9" height="3" fill="#e53935"/><circle cx="5.4" cy="10.4" r="2.6" fill="#ffb74d"/><path d="M2.7 9.9 Q2.8 7.2 5.4 7.2 Q8 7.2 8.1 9.9 Q5.4 8.6 2.7 9.9 Z" fill="#37474f"/></svg>
<div class="t" style="left:75.8px;top:1006.50px;font-size:12.71px;color:#75787f;transform:scaleX(0.8621);transform-origin:0 0;">GESCHÄFTSPARTNER (1)</div>
<svg class="a" style="left:221px;top:1008px" width="9" height="9" viewBox="0 0 9 9"><path d="M1.6 1.6 L7.4 7.4 M7.4 1.6 L1.6 7.4" stroke="#2d3f8e" stroke-width="2.6" stroke-linecap="round"/></svg>
<svg class="a" style="left:249px;top:1003px" width="20" height="18" viewBox="0 0 20 18"><g transform="scale(1.0000)"><rect x="1.7" y="4.5" width="16" height="11" rx="1.2" fill="#f4f7fb" stroke="#78909c" stroke-width="1.2"/><path d="M1.7 14.5 V2.6 Q1.7 1.2 3.1 1.2 H3.5 Q4.9 1.2 4.9 2.6 V10.5 H1.7" fill="#eef3f8" stroke="#78909c" stroke-width="1.2"/><path d="M6.8 10.5 L9.3 8.7 L11.3 10 L14 7.7" fill="none" stroke="#64a8e8" stroke-width="1.2"/><circle cx="14" cy="7.6" r="1.1" fill="#1e88e5"/><path d="M6.5 12.5 H15" stroke="#1e88e5" stroke-width="1.4"/></g></svg>
<div class="t" style="left:273.2px;top:1006.50px;font-size:12.71px;color:#1b1e2c;transform:scaleX(0.8394);transform-origin:0 0;">PROJEKTE (1)</div>
<svg class="a" style="left:356px;top:1008px" width="9" height="9" viewBox="0 0 9 9"><path d="M1.6 1.6 L7.4 7.4 M7.4 1.6 L1.6 7.4" stroke="#2d3f8e" stroke-width="2.6" stroke-linecap="round"/></svg>
<div class="a" style="left:244px;top:1028px;width:132px;height:4px;background:#2c4397;"></div>
<svg class="a" style="left:391px;top:1006px" width="5" height="12" viewBox="0 0 5 12"><circle cx="2.5" cy="1.7" r="1.5" fill="#3a4fa8"/><circle cx="2.5" cy="6" r="1.5" fill="#3a4fa8"/><circle cx="2.5" cy="10.3" r="1.5" fill="#3a4fa8"/></svg>
<div class="t" style="left:408.2px;top:1006.50px;font-size:12.71px;color:#75787f;transform:scaleX(0.8349);transform-origin:0 0;">WEITERE BEREICHE</div>
<svg class="a" style="left:12px;top:93px" width="18" height="28" viewBox="0 0 18 28"><path d="M1 3 Q1 1 3 1 H15 Q17 1 17 3 V27 L9 20 L1 27 Z" fill="#2196f3"/></svg>
<svg class="a" style="left:10px;top:139px" width="22" height="21" viewBox="0 0 22 21"><rect x="5.5" y="1.2" width="15" height="14" rx="2" fill="none" stroke="#5b6f85" stroke-width="2"/><rect x="1.2" y="5.5" width="15" height="14" rx="2" fill="#fdfdfd" stroke="#5b6f85" stroke-width="2"/></svg>
<svg class="a" style="left:9px;top:179px" width="25" height="25" viewBox="0 0 25 25"><path d="M4 6.6 A10.2 10.2 0 1 0 13.5 2.5" fill="none" stroke="#2f95dc" stroke-width="2.3"/><path d="M9.3 2.9 L14 0.3 L14 5.6 Z" fill="#2f95dc"/><path d="M9.5 7.5 L12.2 12.4 L9.5 15.2" fill="none" stroke="#333" stroke-width="1.5"/></svg>
<svg class="a" style="left:7px;top:221px" width="29" height="27" viewBox="0 0 29 27"><g transform="scale(1.0000)"><rect x="2" y="2.2" width="17.9" height="14.1" rx="1.5" fill="#fdfdfd" stroke="#3f51b5" stroke-width="1.7"/><rect x="1.2" y="1.4" width="7.6" height="15.7" rx="1.2" fill="#3f51b5"/><g fill="#e8eaf6"><rect x="2.6" y="3" width="4.8" height="1.5"/><rect x="2.6" y="6.2" width="4.8" height="1.5"/><rect x="2.6" y="9.3" width="4.8" height="1.5"/><rect x="2.6" y="12.6" width="4.8" height="1.5"/></g><path d="M21.5 19.8 L26.6 24.1" stroke="#455a64" stroke-width="2.2" stroke-linecap="round"/><circle cx="18.1" cy="16.3" r="5" fill="#64b5f6" stroke="#5d6b73" stroke-width="0.9"/></g></svg>
<svg class="a" style="left:7px;top:262px" width="27" height="27" viewBox="0 0 27 27"><g transform="translate(13.5 13.5)"><g fill="#607d8b"><rect x="-2.8" y="-12.8" width="5.6" height="6" transform="rotate(0)"/><rect x="-2.8" y="-12.8" width="5.6" height="6" transform="rotate(60)"/><rect x="-2.8" y="-12.8" width="5.6" height="6" transform="rotate(120)"/><rect x="-2.8" y="-12.8" width="5.6" height="6" transform="rotate(180)"/><rect x="-2.8" y="-12.8" width="5.6" height="6" transform="rotate(240)"/><rect x="-2.8" y="-12.8" width="5.6" height="6" transform="rotate(300)"/><circle r="9.8"/></g><circle r="6.6" fill="#2196f3"/><path d="M-2.3 -3.8 L4.3 0 L-2.3 3.8 Z" fill="#fff"/></g></svg>
<svg class="a" style="left:10px;top:304px" width="22" height="27" viewBox="0 0 22 27"><path d="M1.5 1.5 H14 L20.5 8 V25.5 H1.5 Z" fill="#eceff1" stroke="#78909c" stroke-width="1.6"/><circle cx="11" cy="15" r="6" fill="#2196f3"/><path d="M11 15 V9 A6 6 0 0 1 17 15 Z" fill="#ff9800"/><path d="M11 15 H17 A6 6 0 0 1 13 20.7 Z" fill="#ffb74d"/></svg>
<svg class="a" style="left:10px;top:349px" width="22" height="22" viewBox="0 0 22 22"><path d="M1.5 1.5 L10 10" stroke="#78909c" stroke-width="1.8" stroke-linecap="round"/><path d="M4 19 L14.5 8.5" stroke="#607d8b" stroke-width="3" stroke-linecap="round"/><path d="M17.5 1 A4.6 4.6 0 1 0 21 4.5 L18.3 6.2 L15.8 3.7 Z" fill="#607d8b"/><path d="M9.5 9.5 L19 19" stroke="#ffb300" stroke-width="4.2" stroke-linecap="round"/></svg>
<svg class="a" style="left:7px;top:809px" width="28" height="28" viewBox="0 0 28 28"><path d="M1.5 9.5 Q11.5 -1 21.5 9.5 Q11.5 20 1.5 9.5 Z" fill="#fdfdfd" stroke="#455a64" stroke-width="2"/><circle cx="11.5" cy="9.5" r="4" fill="#2196f3"/><circle cx="11.5" cy="9.5" r="1.8" fill="#111"/><path d="M18.80 12.80 L20.62 17.69 L25.84 17.91 L21.75 21.16 L23.15 26.19 L18.80 23.30 L14.45 26.19 L15.85 21.16 L11.76 17.91 L16.98 17.69 Z" fill="#2196f3" stroke="#fdfdfd" stroke-width="0.8" stroke-linejoin="round"/></svg>
<svg class="a" style="left:10px;top:852px" width="22" height="27" viewBox="0 0 22 27"><rect x="1.5" y="3.5" width="19" height="22" rx="1.5" fill="#fdfdfd" stroke="#455a64" stroke-width="2"/><rect x="7" y="1.5" width="8" height="4" rx="1" fill="#cfd8dc" stroke="#455a64" stroke-width="1.2"/><path d="M6.5 20 L15.5 10" stroke="#ffa000" stroke-width="3.2"/><path d="M5.2 21.5 L6.2 18.8 L7.9 20.4 Z" fill="#455a64"/></svg>
<svg class="a" style="left:7px;top:894px" width="28" height="27" viewBox="0 0 28 27"><rect x="0.5" y="4" width="27" height="22.5" rx="2.5" fill="#cfd8dc"/><path d="M0.5 6.5 Q0.5 4 3 4 H25 Q27.5 4 27.5 6.5 V10 H0.5 Z" fill="#e53935"/><rect x="6" y="1" width="2.5" height="6" rx="1" fill="#90a4ae"/><rect x="19.5" y="1" width="2.5" height="6" rx="1" fill="#90a4ae"/><g fill="#9eaab0"><rect x="4" y="13" width="2" height="2"/><rect x="8" y="13" width="2" height="2"/><rect x="12" y="13" width="2" height="2"/><rect x="16" y="13" width="2" height="2"/><rect x="20" y="13" width="2" height="2"/><rect x="4" y="17" width="2" height="2"/><rect x="8" y="17" width="2" height="2"/><rect x="12" y="17" width="2" height="2"/><rect x="16" y="17" width="2" height="2"/><rect x="20" y="17" width="2" height="2"/><rect x="4" y="21" width="2" height="2"/><rect x="8" y="21" width="2" height="2"/><rect x="12" y="21" width="2" height="2"/></g></svg>
<svg class="a" style="left:9px;top:937px" width="26" height="26" viewBox="0 0 26 26"><path d="M1.5 1.5 H11 L16 6.5 V22 H1.5 Z" fill="#fdfdfd" stroke="#78909c" stroke-width="1.6"/><g transform="translate(18.5 18)"><circle r="5.6" fill="#455a64"/><g fill="#455a64"><rect x="-1.4" y="-7.5" width="2.8" height="15"/><rect x="-7.5" y="-1.4" width="15" height="2.8"/><rect x="-1.4" y="-7.5" width="2.8" height="15" transform="rotate(45)"/><rect x="-1.4" y="-7.5" width="2.8" height="15" transform="rotate(-45)"/></g><circle r="2.2" fill="#fdfdfd"/></g></svg>
<svg class="a" style="left:9px;top:980px" width="25" height="25" viewBox="0 0 25 25"><path d="M2.5 11 V8 Q2.5 6 4.5 6 H19" fill="none" stroke="#43a047" stroke-width="2.8"/><path d="M18 1 L24 6 L18 11 Z" fill="#43a047"/><path d="M22.5 14 V17 Q22.5 19 20.5 19 H6" fill="none" stroke="#43a047" stroke-width="2.8"/><path d="M7 14 L1 19 L7 24 Z" fill="#43a047"/></svg>
</body></html>
